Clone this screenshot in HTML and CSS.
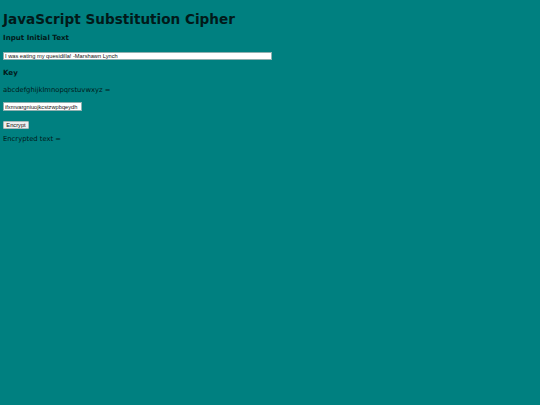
FILE: index.html
```html
<!doctype html>

<html>
    <head>
        <meta charset="utf-8">

        <title>Substitution Cipher</title>

        <link rel="stylesheet" href="styles.css">

    </head>

    <body>

        <h1>JavaScript Substitution Cipher</h1>

        <h3 id="baslik1">Input Initial Text</h3>
        <input type="text" id="girdi" class="alan" value="I was eating my quesidilla! -Marshawn Lynch">

        <h3 id="baslik2">Key</h3>
        <p id="alfabe">abcdefghijklmnopqrstuvwxyz =</p>
        <input type="text" id="anahtar" class="alan" value="ifxmvargniuojkcstzwpbqeydh">

        <button id="btn">Encrypt</button>

        <p id="sonuc">Encrypted text = </p>

    </body>
</html>
```

FILE: styles.css
```css
body{
    margin: 0px;
    padding: 0px 3px;
    background-color: #008080;
    color: #021a1a;
    font-family: "DejaVu Sans", Verdana, sans-serif;
    font-size: 6.8px;
}
h1{
    font-size: 13.6px;
    line-height: 16px;
    margin: 11.3px 0px 0px 0px;
}
h3{
    font-size: 7.1px;
    line-height: 8px;
    margin: 0px;
}
#baslik1{
    margin-top: 7.2px;
}
#baslik2{
    margin-top: 9.1px;
}
p{
    line-height: 8px;
    margin: 0px;
}
#alfabe{
    margin-top: 9.5px;
}
#sonuc{
    margin-top: 5.9px;
}
.alan{
    font-family: "Liberation Sans", Arial, sans-serif;
    font-size: 5.7px;
    padding: 0px 1px;
    height: 6px;
    line-height: 6px;
    border: 1px solid #8fb0b0;
    box-sizing: content-box;
    display: block;
    color: #111;
}
#girdi{
    width: 265px;
    margin-top: 9.2px;
}
#anahtar{
    width: 75px;
    height: 6.7px;
    margin-top: 8px;
}
#btn{
    display: block;
    margin-top: 9.7px;
    font-family: "Liberation Sans", Arial, sans-serif;
    font-size: 5.7px;
    width: 26px;
    height: 8.5px;
    padding: 0px;
    background-color: #efefef;
    border: 1px solid #a9b9b9;
    border-radius: 1px;
    color: #111;
}
```
